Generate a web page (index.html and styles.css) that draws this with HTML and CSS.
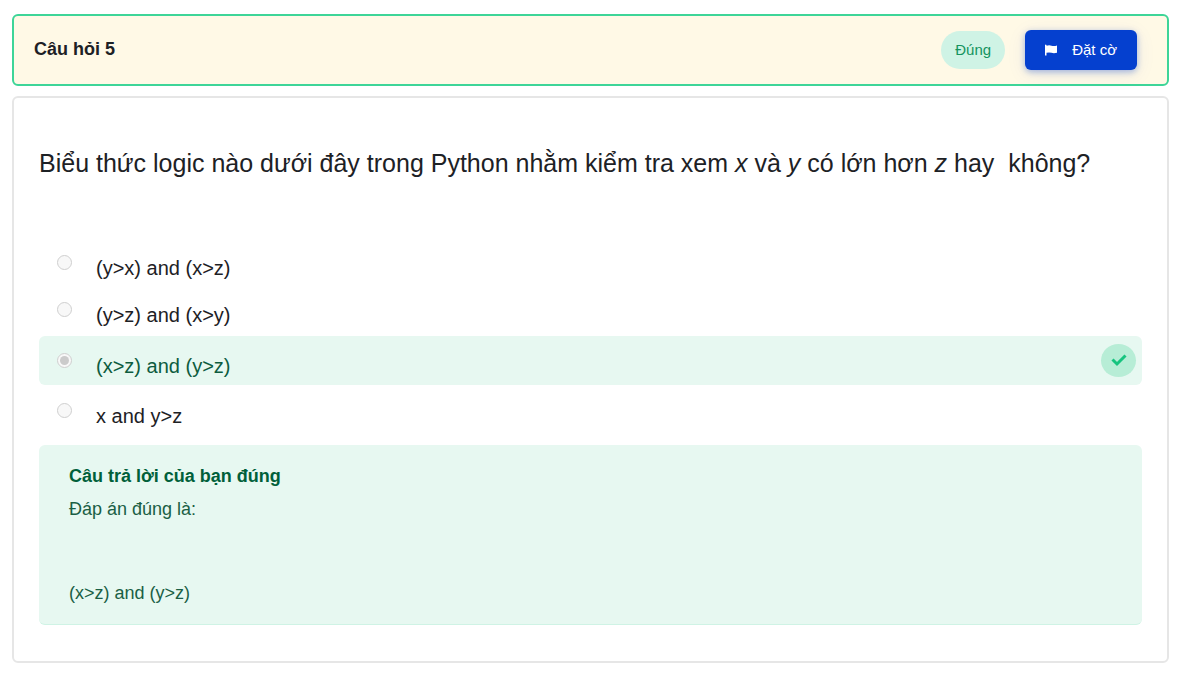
FILE: index.html
```html
<!DOCTYPE html>
<html lang="vi">
<head>
<meta charset="utf-8">
<meta name="viewport" content="width=device-width, initial-scale=1">
<title>Câu hỏi 5</title>
<link rel="stylesheet" href="styles.css">
</head>
<body>
<main class="page">
  <header class="info">
    <h1 class="info-title">Câu hỏi 5</h1>
    <span class="state">Đúng</span>
    <button class="flag" type="button">
      <svg class="flag-icon" viewBox="0 0 12 12" aria-hidden="true"><path d="M0 .9Q.8 .2 1.500 1V1.800Q4 .900 6.500 1.700T12 1.500V8.700Q9 9.500 6.500 8.800T1.500 8.800V11.500H0Z"/></svg>
      <span>Đặt cờ</span>
    </button>
  </header>
  <section class="card">
    <p class="question" id="question">Biểu thức logic nào dưới đây trong Python nhằm kiểm tra xem <em>x</em> và <em>y</em> có lớn hơn <em>z</em> hay &nbsp;không?</p>
    <div class="options" role="radiogroup" aria-labelledby="question">
      <div class="option">
        <input class="radio" type="radio" name="answer" id="a1" disabled>
        <label class="label" for="a1">(y&gt;x) and (x&gt;z)</label>
      </div>
      <div class="option">
        <input class="radio" type="radio" name="answer" id="a2" disabled>
        <label class="label" for="a2">(y&gt;z) and (x&gt;y)</label>
      </div>
      <div class="option option-correct">
        <input class="radio" type="radio" name="answer" id="a3" checked disabled>
        <label class="label" for="a3">(x&gt;z) and (y&gt;z)</label>
        <span class="tick"><svg class="tick-icon" viewBox="0 0 16 14" role="img" aria-label="Đúng"><path d="M1.500 5.500L6 10L14.500 1.500"/></svg></span>
      </div>
      <div class="option">
        <input class="radio" type="radio" name="answer" id="a4" disabled>
        <label class="label" for="a4">x and y&gt;z</label>
      </div>
    </div>
    <div class="feedback">
      <p class="feedback-title">Câu trả lời của bạn đúng</p>
      <p class="feedback-text">Đáp án đúng là:</p>
      <p class="feedback-answer">(x&gt;z) and (y&gt;z)</p>
    </div>
  </section>
</main>
</body>
</html>
```
FILE: styles.css
```css
* {
  box-sizing: border-box;
}

body {
  margin: 0;
  background: #fff;
  color: #1d2125;
  font-family: "Liberation Sans", Arial, sans-serif;
}

p,
h1 {
  margin: 0;
}

.page {
  display: flex;
  flex-direction: column;
  gap: 10px;
  padding: 14px 24px 15px 12px;
}

.info {
  display: flex;
  align-items: center;
  padding: 14px 30px 14px 20px;
  border: 2px solid #3dd598;
  border-radius: 6px;
  background: #fff9e6;
}

.info-title {
  flex: 1;
  padding-bottom: 2px;
  font-size: 18px;
  line-height: 24px;
}

.state {
  margin-right: 20px;
  padding: 9px 14px;
  border-radius: 20px;
  background: #cff3e5;
  color: #14945f;
  font-size: 15px;
  line-height: 20px;
}

.flag {
  display: flex;
  align-items: center;
  gap: 15px;
  padding: 10px 20px;
  border: 0;
  border-radius: 6px;
  background: #0540cf;
  box-shadow: 0 2px 6px rgba(5, 64, 207, 0.35), 0 4px 20px rgba(5, 64, 207, 0.08);
  color: #fff;
  font: 15px/20px "Liberation Sans", Arial, sans-serif;
}

.flag-icon {
  width: 12px;
  height: 12px;
  fill: currentColor;
}

.card {
  padding: 47px 25px 36px;
  border: 2px solid #e6e6e6;
  border-radius: 6px;
}

.question {
  font-size: 25px;
  line-height: 37px;
}

.options {
  display: flex;
  flex-direction: column;
  gap: 5px;
  padding: 60px 0 13px;
}

.option {
  display: flex;
  align-items: center;
  gap: 24px;
  min-height: 42px;
  padding: 0 6px 0 18px;
  border-radius: 6px;
}

.option-correct {
  min-height: 49px;
  background: #e7f8f1;
  color: #0d5c3f;
}

.radio {
  display: grid;
  place-items: center;
  width: 15px;
  height: 15px;
  margin: 0 0 1px;
  border: 1px solid #cfcfcf;
  border-radius: 50%;
  appearance: none;
  background: #f8f8f8;
}

.radio:checked::before {
  content: "";
  width: 9px;
  height: 9px;
  border-radius: 50%;
  background: #cbcbcb;
}

.label {
  flex: 1;
  padding-top: 10px;
  font-size: 20px;
  line-height: 30px;
}

.tick {
  display: grid;
  place-items: center;
  width: 35px;
  height: 33px;
  border-radius: 50%;
  background: #b7edd6;
}

.tick-icon {
  width: 16px;
  height: 14px;
  fill: none;
  stroke: #16c47f;
  stroke-width: 3;
}

.feedback {
  padding: 18px 30px 18px;
  border-bottom: 1px solid #cff3e5;
  border-radius: 6px;
  background: #e7f8f1;
  color: #1a5f45;
  font-size: 18px;
  line-height: 26px;
}

.feedback-title {
  padding-bottom: 7px;
  color: #00603a;
  font-weight: bold;
}

.feedback-answer {
  padding-top: 58px;
}
```
